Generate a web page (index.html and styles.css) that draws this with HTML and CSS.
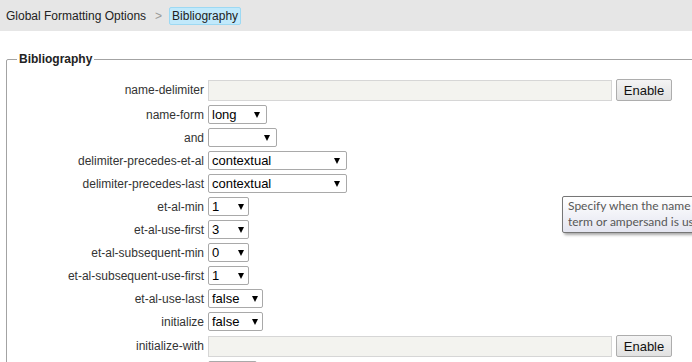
FILE: index.html
```html
<!DOCTYPE html>
<html lang="en">
<head>
    <meta charset="UTF-8">
    <title>Global Formatting Options - Bibliography</title>
    <link rel="stylesheet" href="styles.css">
</head>
<body>
    <div class="breadcrumb">
        <span>Global Formatting Options</span>
        <span class="crumb-sep">&gt;</span>
        <span class="crumb-current">Bibliography</span>
    </div>

    <fieldset class="options">
        <legend>Bibliography</legend>
        <div class="form-grid">
            <label>name-delimiter</label>
            <div class="control">
                <input type="text" class="text-field" disabled>
                <button class="enable-btn">Enable</button>
            </div>

            <label>name-form</label>
            <div class="control">
                <span class="select w-form"><select><option>long</option><option>short</option><option>count</option></select></span>
            </div>

            <label>and</label>
            <div class="control">
                <span class="select w-and"><select><option></option><option>text</option><option>symbol</option></select></span>
            </div>

            <label>delimiter-precedes-et-al</label>
            <div class="control">
                <span class="select w-wide"><select><option>contextual</option><option>after-inverted-name</option><option>always</option><option>never</option></select></span>
            </div>

            <label>delimiter-precedes-last</label>
            <div class="control">
                <span class="select w-wide"><select><option>contextual</option><option>after-inverted-name</option><option>always</option><option>never</option></select></span>
            </div>

            <label>et-al-min</label>
            <div class="control">
                <span class="select w-num"><select><option>1</option><option>2</option><option>3</option></select></span>
            </div>

            <label>et-al-use-first</label>
            <div class="control">
                <span class="select w-num"><select><option>3</option><option>1</option><option>2</option></select></span>
            </div>

            <label>et-al-subsequent-min</label>
            <div class="control">
                <span class="select w-num"><select><option>0</option><option>1</option><option>2</option></select></span>
            </div>

            <label>et-al-subsequent-use-first</label>
            <div class="control">
                <span class="select w-num"><select><option>1</option><option>2</option><option>3</option></select></span>
            </div>

            <label>et-al-use-last</label>
            <div class="control">
                <span class="select w-bool"><select><option>false</option><option>true</option></select></span>
            </div>

            <label>initialize</label>
            <div class="control">
                <span class="select w-bool"><select><option>false</option><option>true</option></select></span>
            </div>

            <label>initialize-with</label>
            <div class="control">
                <input type="text" class="text-field" disabled>
                <button class="enable-btn">Enable</button>
            </div>

            <label></label>
            <div class="control">
                <span class="select w-true"><select><option></option></select></span>
            </div>
        </div>
    </fieldset>

    <div class="tooltip">Specify when the name delimiter is used between the last two names<br>term or ampersand is used</div>
</body>
</html>
```

FILE: styles.css
```css
html, body {
    overflow: hidden;
}

body {
    margin: 0;
    font-family: 'Liberation Sans', Arial, sans-serif;
    font-size: 12px;
    color: #333;
    background: #fff;
    position: relative;
    height: 362px;
}

.breadcrumb {
    display: flex;
    align-items: center;
    height: 31px;
    padding-left: 6px;
    background-color: #e6e6e6;
    color: #222;
}

.crumb-sep {
    margin: 0 7px 0 9px;
    color: #999;
}

.crumb-current {
    padding: 1px 2px;
    background-color: #c1e9fb;
    border: 1px solid #9dd9f3;
    border-radius: 2px;
}

.options {
    width: 760px;
    margin: 21px 0 0 6px;
    padding: 13px 10px 10px 10px;
    border: 1px solid #a3a3a3;
    border-radius: 2px;
}

.options legend {
    padding: 0 2px;
    font-weight: bold;
    line-height: 14px;
    color: #222;
}

.form-grid {
    display: grid;
    grid-template-columns: 187px auto;
    column-gap: 4px;
    row-gap: 4px;
    align-items: center;
}

.form-grid label {
    text-align: right;
}

.control {
    display: flex;
    align-items: center;
    gap: 4px;
}

.text-field {
    box-sizing: border-box;
    width: 404px;
    height: 21px;
    margin: 0;
    border: 1px solid #d6d6d6;
    background-color: #f3f3ef;
}

.enable-btn {
    box-sizing: border-box;
    width: 56px;
    height: 22px;
    margin: 0;
    padding: 0;
    font-family: 'Liberation Sans', Arial, sans-serif;
    font-size: 13px;
    color: #111;
    border: 1px solid #adadad;
    border-radius: 2px;
    background: linear-gradient(#f4f4f4, #e1e1e1);
}

/* fake native select with a small filled arrow */
.select {
    position: relative;
    display: inline-block;
}

.select select {
    box-sizing: border-box;
    appearance: none;
    -webkit-appearance: none;
    width: 100%;
    height: 19px;
    margin: 0;
    padding: 0 0 0 3px;
    font-family: 'Liberation Sans', Arial, sans-serif;
    font-size: 13px;
    color: #000;
    background: #fff;
    border: 1px solid #a9a9a9;
    border-radius: 2px;
}

.select::after {
    content: "";
    position: absolute;
    top: 7px;
    right: 7px;
    border-left: 3px solid transparent;
    border-right: 3px solid transparent;
    border-top: 6px solid #000;
    pointer-events: none;
}

.w-form { width: 59px; }
.w-and { width: 69px; }
.w-wide { width: 139px; }
.w-num { width: 41px; }
.w-bool { width: 55px; }
.w-true { width: 49px; }

.w-num::after,
.w-bool::after {
    right: 5px;
}

.tooltip {
    position: absolute;
    left: 562px;
    top: 196px;
    padding: 1px 5px 2px 5px;
    white-space: nowrap;
    font-family: Lato, 'Noto Sans', sans-serif;
    font-size: 12px;
    line-height: 16px;
    color: #575757;
    border: 1px solid #767676;
    border-radius: 2px;
    background: linear-gradient(#ffffff, #e4e5f0);
    box-shadow: 2px 2px 3px rgba(0, 0, 0, 0.35);
}
```
